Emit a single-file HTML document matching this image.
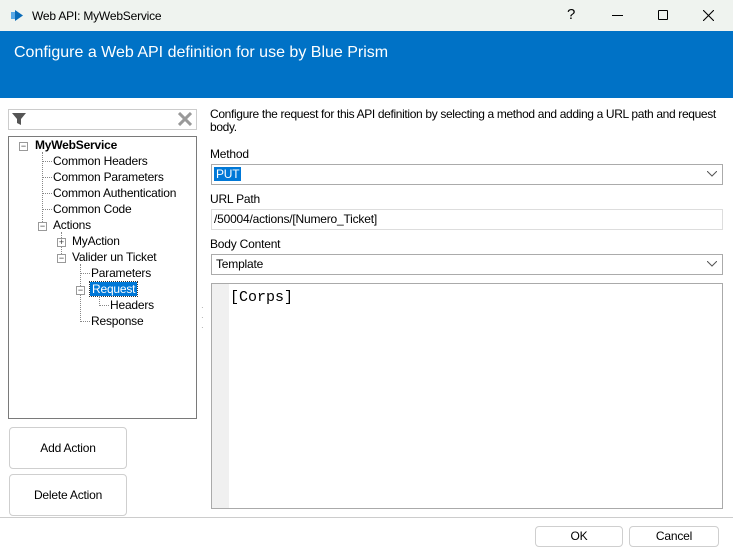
<!DOCTYPE html>
<html><head><style>
*{box-sizing:border-box;margin:0;padding:0}
body{width:733px;height:558px;background:#fff;font-family:"Liberation Sans",sans-serif;font-size:12px;letter-spacing:-0.2px;color:#000;position:relative;overflow:hidden}
.a{position:absolute}
.tb{left:0;top:0;width:733px;height:31px;background:#eff3ef}
.hdr{left:0;top:31px;width:733px;height:67px;background:#0072c6;color:#fff;font-size:16px;padding:13px 14px;letter-spacing:0}
.box{border:1px solid #7a7a7a;background:#fff}
.combo{border:1px solid #ababab;background:#fff;height:21px;padding:2px 2px;font-size:12px}
.btn{border:1px solid #cfcfcf;border-radius:4px;background:#fff;text-align:center;font-size:12px}
.ti{position:absolute;font-size:12px;white-space:nowrap}
.pm{position:absolute;width:9px;height:9px;border:1px solid #999;background:#fff;font-size:9px;line-height:7px;text-align:center;color:#333;letter-spacing:0}
.dv{position:absolute;border-left:1px dotted #888}
.dh{position:absolute;border-top:1px dotted #888}
</style></head><body>
<div class="a tb"></div>
<svg class="a" style="left:10px;top:9px" width="14" height="13"><path d="M1 3h5v7H1z" fill="#5aa9e6"/><path d="M5 1l8 5.5L5 12z" fill="#0a6bb8"/></svg>
<div class="a" style="left:32px;top:9px;font-size:12px">Web API: MyWebService</div>
<div class="a" style="left:567px;top:6px;font-size:15px">?</div>
<div class="a" style="left:612px;top:15px;width:11px;height:1px;background:#000"></div>
<div class="a" style="left:658px;top:10px;width:10px;height:10px;border:1px solid #000;border-radius:1px"></div>
<svg class="a" style="left:703px;top:10px" width="11" height="11"><path d="M0 0L11 11M11 0L0 11" stroke="#000" stroke-width="1.1"/></svg>
<div class="a hdr">Configure a Web API definition for use by Blue Prism</div>

<div class="a box" style="left:8px;top:109px;width:189px;height:21px;border-color:#ccc"></div>
<svg class="a" style="left:12px;top:112px" width="14" height="14"><path d="M0 1h14l-5 6v6l-4-2V7z" fill="#555"/></svg>
<svg class="a" style="left:178px;top:112px" width="14" height="14"><path d="M1 1L13 13M13 1L1 13" stroke="#999" stroke-width="3"/></svg>

<div class="a box" style="left:8px;top:136px;width:189px;height:283px">
<div class="pm" style="left:10px;top:5px">−</div>
<div class="ti" style="left:26px;top:1px;font-weight:bold">MyWebService</div>
<div class="dv" style="left:33px;top:15px;height:74px"></div>
<div class="dh" style="left:33px;top:24px;width:10px"></div><div class="ti" style="left:44px;top:17px">Common Headers</div>
<div class="dh" style="left:33px;top:40px;width:10px"></div><div class="ti" style="left:44px;top:33px">Common Parameters</div>
<div class="dh" style="left:33px;top:56px;width:10px"></div><div class="ti" style="left:44px;top:49px">Common Authentication</div>
<div class="dh" style="left:33px;top:72px;width:10px"></div><div class="ti" style="left:44px;top:65px">Common Code</div>
<div class="pm" style="left:29px;top:85px">−</div><div class="ti" style="left:44px;top:81px">Actions</div>
<div class="dv" style="left:52px;top:95px;height:26px"></div>
<div class="pm" style="left:48px;top:101px">+</div><div class="ti" style="left:63px;top:97px">MyAction</div>
<div class="pm" style="left:48px;top:117px">−</div><div class="ti" style="left:63px;top:113px">Valider un Ticket</div>
<div class="dv" style="left:71px;top:127px;height:58px"></div>
<div class="dh" style="left:71px;top:136px;width:10px"></div><div class="ti" style="left:82px;top:129px">Parameters</div>
<div class="pm" style="left:67px;top:149px">−</div>
<div class="ti" style="left:81px;top:145px;background:#0078d7;color:#fff;padding:0 2px;outline:1px dotted #333">Request</div>
<div class="dv" style="left:90px;top:159px;height:10px"></div>
<div class="dh" style="left:90px;top:168px;width:10px"></div><div class="ti" style="left:101px;top:161px">Headers</div>
<div class="dh" style="left:71px;top:184px;width:10px"></div><div class="ti" style="left:82px;top:177px">Response</div>
</div>

<div class="a btn" style="left:9px;top:427px;width:118px;height:42px;line-height:40px">Add Action</div>
<div class="a btn" style="left:9px;top:474px;width:118px;height:42px;line-height:40px">Delete Action</div>

<div class="a" style="left:201px;top:303px;color:#999;font-size:8px;line-height:10px">·<br>·<br>·</div>

<div class="a" style="left:210px;top:108px;line-height:13px;white-space:nowrap;letter-spacing:-0.35px">Configure the request for this API definition by selecting a method and adding a URL path and request<br>body.</div>
<div class="a" style="left:210px;top:147px">Method</div>
<div class="a combo" style="left:211px;top:164px;width:512px"><span style="background:#0078d7;color:#fff;padding:0 2px">PUT</span></div>
<svg class="a" style="left:707px;top:171px" width="10" height="6"><path d="M0 0l5 5 5-5" stroke="#555" fill="none"/></svg>
<div class="a" style="left:210px;top:192px">URL Path</div>
<div class="a combo" style="left:211px;top:209px;width:512px;border-color:#ddd">/50004/actions/[Numero_Ticket]</div>
<div class="a" style="left:210px;top:237px">Body Content</div>
<div class="a combo" style="left:211px;top:254px;width:512px;padding-left:4px">Template</div>
<svg class="a" style="left:707px;top:261px" width="10" height="6"><path d="M0 0l5 5 5-5" stroke="#555" fill="none"/></svg>
<div class="a" style="left:211px;top:283px;width:512px;height:226px;border:1px solid #aaa;background:#fff"></div>
<div class="a" style="left:212px;top:284px;width:17px;height:224px;background:#f0f0f0"></div>
<div class="a" style="left:230px;top:289px;font-family:'Liberation Mono',monospace;font-size:15px;letter-spacing:0">[Corps]</div>

<div class="a" style="left:0;top:517px;width:733px;height:1px;background:#ccc"></div>
<div class="a btn" style="left:535px;top:526px;width:88px;height:21px;line-height:19px">OK</div>
<div class="a btn" style="left:629px;top:526px;width:90px;height:21px;line-height:19px">Cancel</div>
</body></html>
